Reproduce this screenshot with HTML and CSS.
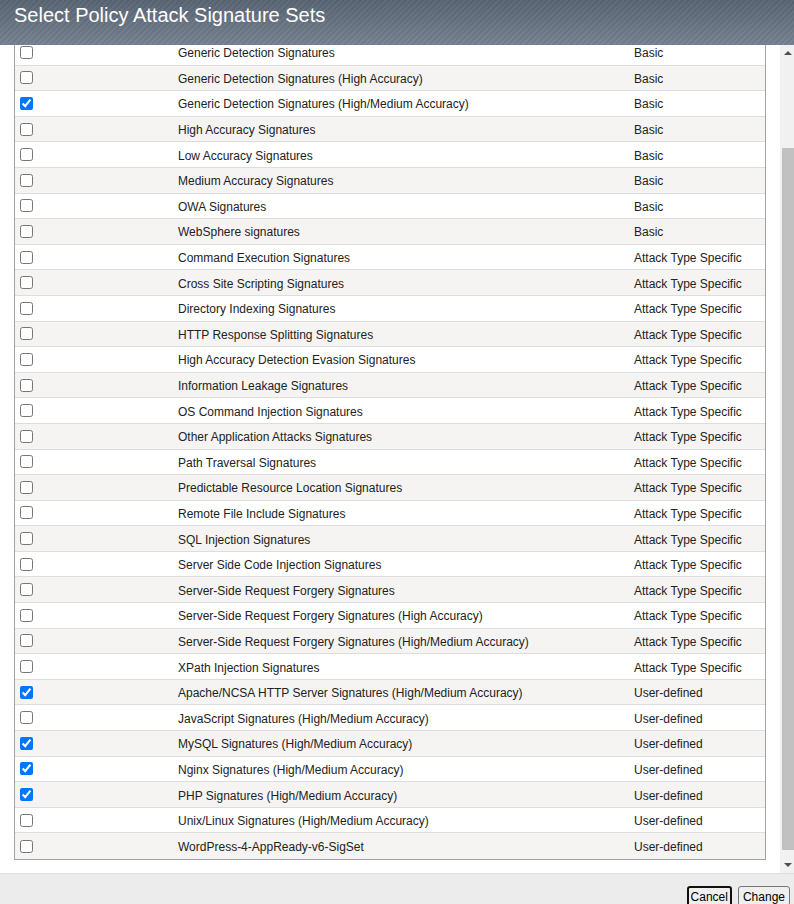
FILE: index.html
```html
<!DOCTYPE html>
<html>
<head>
<meta charset="utf-8">
<link rel="stylesheet" href="styles.css">
</head>
<body>
<div class="dialog">
  <header class="titlebar">Select Policy Attack Signature Sets</header>
  <div class="middle">
    <div class="pane">
      <div class="sigtable">
        <div class="row"><div class="c1"><input type="checkbox"></div><div class="c2">Generic Detection Signatures</div><div class="c3">Basic</div></div>
        <div class="row"><div class="c1"><input type="checkbox"></div><div class="c2">Generic Detection Signatures (High Accuracy)</div><div class="c3">Basic</div></div>
        <div class="row"><div class="c1"><input type="checkbox" checked></div><div class="c2">Generic Detection Signatures (High/Medium Accuracy)</div><div class="c3">Basic</div></div>
        <div class="row"><div class="c1"><input type="checkbox"></div><div class="c2">High Accuracy Signatures</div><div class="c3">Basic</div></div>
        <div class="row"><div class="c1"><input type="checkbox"></div><div class="c2">Low Accuracy Signatures</div><div class="c3">Basic</div></div>
        <div class="row"><div class="c1"><input type="checkbox"></div><div class="c2">Medium Accuracy Signatures</div><div class="c3">Basic</div></div>
        <div class="row"><div class="c1"><input type="checkbox"></div><div class="c2">OWA Signatures</div><div class="c3">Basic</div></div>
        <div class="row"><div class="c1"><input type="checkbox"></div><div class="c2">WebSphere signatures</div><div class="c3">Basic</div></div>
        <div class="row"><div class="c1"><input type="checkbox"></div><div class="c2">Command Execution Signatures</div><div class="c3">Attack Type Specific</div></div>
        <div class="row"><div class="c1"><input type="checkbox"></div><div class="c2">Cross Site Scripting Signatures</div><div class="c3">Attack Type Specific</div></div>
        <div class="row"><div class="c1"><input type="checkbox"></div><div class="c2">Directory Indexing Signatures</div><div class="c3">Attack Type Specific</div></div>
        <div class="row"><div class="c1"><input type="checkbox"></div><div class="c2">HTTP Response Splitting Signatures</div><div class="c3">Attack Type Specific</div></div>
        <div class="row"><div class="c1"><input type="checkbox"></div><div class="c2">High Accuracy Detection Evasion Signatures</div><div class="c3">Attack Type Specific</div></div>
        <div class="row"><div class="c1"><input type="checkbox"></div><div class="c2">Information Leakage Signatures</div><div class="c3">Attack Type Specific</div></div>
        <div class="row"><div class="c1"><input type="checkbox"></div><div class="c2">OS Command Injection Signatures</div><div class="c3">Attack Type Specific</div></div>
        <div class="row"><div class="c1"><input type="checkbox"></div><div class="c2">Other Application Attacks Signatures</div><div class="c3">Attack Type Specific</div></div>
        <div class="row"><div class="c1"><input type="checkbox"></div><div class="c2">Path Traversal Signatures</div><div class="c3">Attack Type Specific</div></div>
        <div class="row"><div class="c1"><input type="checkbox"></div><div class="c2">Predictable Resource Location Signatures</div><div class="c3">Attack Type Specific</div></div>
        <div class="row"><div class="c1"><input type="checkbox"></div><div class="c2">Remote File Include Signatures</div><div class="c3">Attack Type Specific</div></div>
        <div class="row"><div class="c1"><input type="checkbox"></div><div class="c2">SQL Injection Signatures</div><div class="c3">Attack Type Specific</div></div>
        <div class="row"><div class="c1"><input type="checkbox"></div><div class="c2">Server Side Code Injection Signatures</div><div class="c3">Attack Type Specific</div></div>
        <div class="row"><div class="c1"><input type="checkbox"></div><div class="c2">Server-Side Request Forgery Signatures</div><div class="c3">Attack Type Specific</div></div>
        <div class="row"><div class="c1"><input type="checkbox"></div><div class="c2">Server-Side Request Forgery Signatures (High Accuracy)</div><div class="c3">Attack Type Specific</div></div>
        <div class="row"><div class="c1"><input type="checkbox"></div><div class="c2">Server-Side Request Forgery Signatures (High/Medium Accuracy)</div><div class="c3">Attack Type Specific</div></div>
        <div class="row"><div class="c1"><input type="checkbox"></div><div class="c2">XPath Injection Signatures</div><div class="c3">Attack Type Specific</div></div>
        <div class="row"><div class="c1"><input type="checkbox" checked></div><div class="c2">Apache/NCSA HTTP Server Signatures (High/Medium Accuracy)</div><div class="c3">User-defined</div></div>
        <div class="row"><div class="c1"><input type="checkbox"></div><div class="c2">JavaScript Signatures (High/Medium Accuracy)</div><div class="c3">User-defined</div></div>
        <div class="row"><div class="c1"><input type="checkbox" checked></div><div class="c2">MySQL Signatures (High/Medium Accuracy)</div><div class="c3">User-defined</div></div>
        <div class="row"><div class="c1"><input type="checkbox" checked></div><div class="c2">Nginx Signatures (High/Medium Accuracy)</div><div class="c3">User-defined</div></div>
        <div class="row"><div class="c1"><input type="checkbox" checked></div><div class="c2">PHP Signatures (High/Medium Accuracy)</div><div class="c3">User-defined</div></div>
        <div class="row"><div class="c1"><input type="checkbox"></div><div class="c2">Unix/Linux Signatures (High/Medium Accuracy)</div><div class="c3">User-defined</div></div>
        <div class="row"><div class="c1"><input type="checkbox"></div><div class="c2">WordPress-4-AppReady-v6-SigSet</div><div class="c3">User-defined</div></div>
      </div>
    </div>
    <div class="scrollbar">
      <div class="arrow up"></div>
      <div class="track"><div class="thumb"></div></div>
      <div class="arrow down"></div>
    </div>
  </div>
  <footer class="footer">
    <button class="btn btn-focus">Cancel</button>
    <button class="btn">Change</button>
  </footer>
</div>
</body>
</html>
```

FILE: styles.css
```css
html, body {
  margin: 0;
  padding: 0;
  background: #ffffff;
  overflow: hidden;
}
body {
  width: 794px;
  height: 904px;
  font-family: "Liberation Sans", Arial, sans-serif;
}
.dialog {
  display: flex;
  flex-direction: column;
  height: 904px;
}
.titlebar {
  height: 45px;
  box-sizing: border-box;
  padding: 3px 0 0 14px;
  font-size: 20px;
  line-height: 24px;
  color: #ffffff;
  background:
    repeating-linear-gradient(135deg, rgba(255,255,255,0.035) 0 2px, rgba(0,0,0,0.03) 2px 4px),
    linear-gradient(to bottom, #586473 0%, #6a7584 60%, #76818f 100%);
  flex: none;
}
.middle {
  display: flex;
  height: 828px;
  flex: none;
}
.pane {
  flex: 1;
  overflow: hidden;
  padding-left: 14px;
}
.sigtable {
  margin-top: -5px;
  width: 752px;
  box-sizing: border-box;
  border-left: 1px solid #a3a3a3;
  border-right: 1px solid #a3a3a3;
  border-bottom: 1px solid #a3a3a3;
}
.row {
  display: grid;
  grid-template-columns: 163px 456px 1fr;
  align-items: center;
  height: 25.6px;
  box-sizing: border-box;
  border-bottom: 1px solid #dddddd;
  font-size: 12px;
  color: #222222;
  background: #ffffff;
}
.row:nth-child(even) {
  background: #f5f4f2;
}
.row:last-child {
  border-bottom: none;
}
.c1 {
  display: flex;
  align-items: center;
  padding-left: 1px;
}
.c1 input {
  margin: 0 0 0 4px;
  width: 13px;
  height: 13px;
}
.c2, .c3 {
  white-space: nowrap;
  line-height: 14px;
  padding-top: 2px;
}
.scrollbar {
  width: 14px;
  margin-left: 0;
  flex: none;
  background: #f1f1f1;
  display: flex;
  flex-direction: column;
}
.arrow {
  height: 17px;
  flex: none;
  position: relative;
}
.arrow::after {
  content: "";
  position: absolute;
  left: 4px;
  width: 0;
  height: 0;
  border-left: 4px solid transparent;
  border-right: 4px solid transparent;
}
.arrow.up::after {
  top: 6px;
  border-bottom: 4px solid #505050;
}
.arrow.down::after {
  top: 7px;
  border-top: 4px solid #505050;
}
.track {
  flex: 1;
  display: flex;
  flex-direction: column;
  padding-left: 2px;
}
.thumb {
  margin-top: 86px;
  height: 702px;
  background: #c1c1c1;
}
.footer {
  flex: 1;
  background: #ececec;
  border-top: 1px solid #dedede;
  display: flex;
  justify-content: flex-end;
  align-items: flex-start;
  gap: 6px;
  padding: 12px 4px 0 0;
}
.btn {
  font-family: "Liberation Sans", Arial, sans-serif;
  font-size: 12px;
  color: #000000;
  background: #efefef;
  border: 1px solid #767676;
  border-radius: 3px;
  padding: 3px 4px 4px;
  line-height: 14px;
  margin: 0;
}
.btn-focus {
  border: 2px solid #101010;
  padding: 2px 2px 3px;
}
```
